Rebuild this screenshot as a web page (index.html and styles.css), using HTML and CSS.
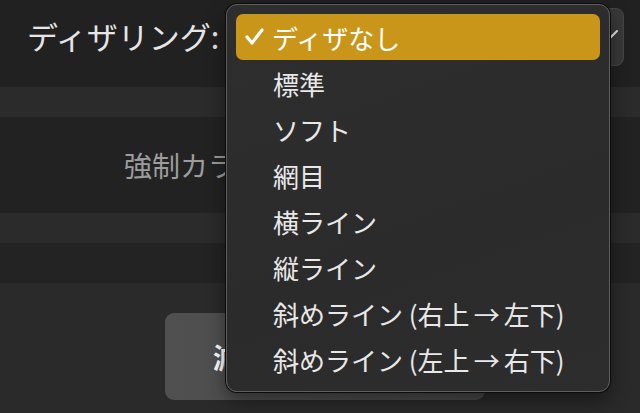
FILE: index.html
```html
<!DOCTYPE html>
<html lang="ja">
<head>
<meta charset="utf-8">
<link rel="stylesheet" href="styles.css">
</head>
<body>
<div class="page">
  <div class="row-top">
    <span class="label">ディザリング:</span>
    <div class="popup">
      <span class="popup-text">ディザなし</span>
      <svg class="chev" width="16" height="12" viewBox="0 0 16 12"><polyline points="2,2 8,8 14,2" fill="none" stroke="#e6e6e6" stroke-width="2" stroke-linecap="round"/></svg>
    </div>
  </div>
  <div class="band"></div>
  <div class="row-mid">
    <span class="label-gray">強制カラー:</span>
  </div>
  <div class="band"></div>
  <div class="gap"></div>
  <div class="bottom">
    <button class="btn">減色を適用します</button>
  </div>
</div>

<div class="menu">
  <div class="item selected">
    <svg class="check" width="20" height="18" viewBox="0 0 20 18"><polyline points="2,9 7,15 17,2" fill="none" stroke="#ffffff" stroke-width="3.2" stroke-linecap="round" stroke-linejoin="round"/></svg>
    <span>ディザなし</span>
  </div>
  <div class="item"><span>標準</span></div>
  <div class="item"><span>ソフト</span></div>
  <div class="item"><span>網目</span></div>
  <div class="item"><span>横ライン</span></div>
  <div class="item"><span>縦ライン</span></div>
  <div class="item"><span>斜めライン (右上<span class="arrow">→</span>左下)</span></div>
  <div class="item"><span>斜めライン (左上<span class="arrow">→</span>右下)</span></div>
</div>
</body>
</html>
```

FILE: styles.css
```css
html, body {
  margin: 0;
  padding: 0;
  background: #232323;
  font-family: "Noto Sans CJK JP", "Noto Sans", sans-serif;
  overflow: hidden;
}

.page {
  width: 640px;
  height: 413px;
  display: flex;
  flex-direction: column;
}

.row-top {
  height: 87px;
  display: flex;
  align-items: flex-start;
  padding-left: 27px;
  box-sizing: border-box;
  background: #212121;
}

.label {
  font-size: 31px;
  line-height: 30px;
  color: #e6e6e6;
  margin-top: 21px;
  white-space: nowrap;
}

.popup {
  margin-top: 8px;
  margin-left: 10px;
  flex: 1;
  margin-right: 16px;
  height: 58px;
  background: #393939;
  border: 1px solid #454545;
  border-radius: 8px;
  box-sizing: border-box;
  display: flex;
  align-items: center;
  justify-content: space-between;
  padding: 0 4px 0 16px;
  color: #e6e6e6;
  font-size: 26px;
}

.chev {
  margin-top: -4px;
}

.band {
  height: 30px;
  background: #2b2b2b;
}

.row-mid {
  height: 96px;
  display: flex;
  align-items: center;
  padding-left: 124px;
  background: #222222;
}

.label-gray {
  font-size: 28px;
  color: #9c9c9c;
  white-space: nowrap;
}

.gap {
  height: 40px;
  background: #232323;
}

.bottom {
  flex: 1;
  background: #2a2a2a;
  padding: 30px 0 0 165px;
}

.btn {
  width: 320px;
  height: 87px;
  border: none;
  border-radius: 9px;
  background: linear-gradient(90deg, #505050, #484848);
  color: #ffffff;
  font-family: "Noto Sans CJK JP", sans-serif;
  font-size: 28px;
  font-weight: 700;
  white-space: nowrap;
  padding: 0;
}

.menu {
  position: absolute;
  left: 226px;
  top: 4px;
  width: 384px;
  height: 388px;
  box-sizing: border-box;
  background: linear-gradient(160deg, #2e2e2e, #2b2b2b 60%, #2d2d2d);
  border: 1px solid #5e5e5e;
  border-radius: 11px;
  box-shadow: 0 0 0 1px #0c0c0c, 0 8px 20px rgba(0,0,0,0.45);
  padding: 9px 9px;
  display: flex;
  flex-direction: column;
}

.item {
  height: 46px;
  flex: none;
  display: flex;
  align-items: center;
  padding-left: 37px;
  font-size: 26px;
  color: #e8e8e8;
  white-space: nowrap;
  position: relative;
  border-radius: 7px;
}

.item.selected {
  background: #c9961a;
  color: #ffffff;
  padding-left: 9px;
}

.check {
  margin-right: 7px;
  flex: none;
}

.arrow {
  margin: 0 4px;
}
```
